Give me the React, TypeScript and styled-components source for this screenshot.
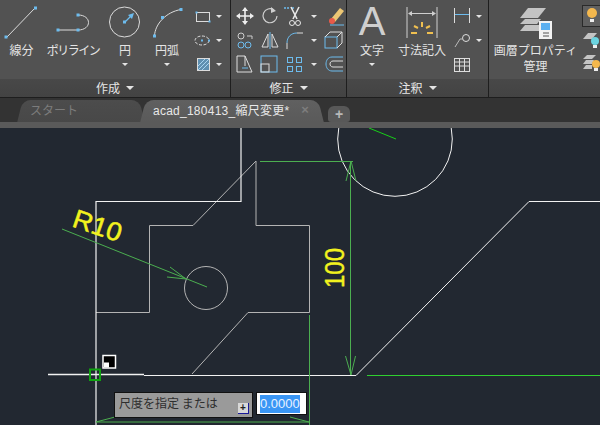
import React from "react";
import styled, { createGlobalStyle } from "styled-components";

const Global = createGlobalStyle`
  html, body { margin: 0; padding: 0; width: 600px; height: 425px; overflow: hidden; background: #222831; }
  #root { width: 600px; height: 425px; }
  * { box-sizing: border-box; }
`;

const Page = styled.div`
  width: 600px; height: 425px; display: flex; flex-direction: column; overflow: hidden;
  font-family: "Noto Sans CJK JP", "Liberation Sans", sans-serif;
`;
const Ribbon = styled.div`
  height: 98px; flex: none; display: flex; background: #1e1e1e; padding-bottom: 1px;
`;
const Panel = styled.section<{ $w: number }>`
  width: ${(p) => p.$w}px; flex: none; display: flex; flex-direction: column;
  margin-right: 1px; background: #525252;
  &:last-child { margin-right: 0; flex: 1; }
`;
const PanelBody = styled.div`
  height: 79px; display: flex; overflow: hidden;
`;
const PanelTitle = styled.div`
  height: 18px; display: flex; align-items: center; justify-content: center; gap: 6px;
  background: linear-gradient(#484848, #434343); color: #e6e6e6; font-size: 12px; line-height: 18px;
`;
const Caret = styled.i`
  display: block; width: 0; height: 0; flex: none;
  border-left: 3.5px solid transparent; border-right: 3.5px solid transparent; border-top: 3.5px solid #e4e4e4;
`;
const TitleCaret = styled(Caret)`
  border-left-width: 4px; border-right-width: 4px; border-top-width: 4px;
`;
const BigTool = styled.div<{ $w: number }>`
  width: ${(p) => p.$w}px; flex: none; display: flex; flex-direction: column; align-items: center;
  color: #e4e4e4;
`;
const BigIcon = styled.svg`
  display: block; height: 42px; flex: none;
`;
const BigLabel = styled.div<{ $tight?: boolean }>`
  font-size: 12px; line-height: 16px; height: 16px; white-space: nowrap;
  letter-spacing: ${(p) => (p.$tight ? "-1.5px" : "0")};
`;
const BigCaret = styled(Caret)`
  margin-top: 5px;
`;
const LetterIcon = styled.div`
  height: 42px; font-family: "Liberation Sans", sans-serif; font-size: 40px; line-height: 42px; color: #cfcfcf;
`;
const SmallColumn = styled.div<{ $w: number; $inset?: number }>`
  width: ${(p) => p.$w}px; flex: none; display: flex; flex-direction: column; padding: 4px 0 0 ${(p) => p.$inset ?? 0}px;
`;
const SmallRow = styled.div`
  height: 24px; display: flex; align-items: center; gap: 3px;
`;
const SmallIcon = styled.svg`
  display: block; width: 22px; height: 22px; flex: none;
`;
const ToolGrid = styled.div`
  display: grid; grid-template-columns: 25px 25px 39px 22px; grid-auto-rows: 24px;
  padding: 4px 0 0 3px; align-items: center;
`;
const Cell = styled.div`
  display: flex; align-items: center; gap: 5px;
`;
const Selected = styled.div`
  width: 19px; height: 22px; border: 1px solid #2a2a2a; background: #606060; display: flex; align-items: center; justify-content: center;
  margin-top: 1px;
`;
const TabBar = styled.div`
  height: 30px; flex: none; display: flex; align-items: flex-end; padding: 0 0 6px 20px;
  background: linear-gradient(#333 0, #333 24px, #5a5a5a 24px, #5a5a5a 30px);
`;
const Tab = styled.div<{ $active?: boolean; $w: number }>`
  position: relative; width: ${(p) => p.$w}px; height: 22px; margin-right: 1px; flex: none;
  display: flex; align-items: center; font-size: 12px; line-height: 20px; isolation: isolate;
  color: ${(p) => (p.$active ? "#e8e8e8" : "#7c7c7c")};
  letter-spacing: ${(p) => (p.$active ? "0.25px" : "0")};
  font-family: "Liberation Sans", "Noto Sans CJK JP", sans-serif;
  padding-left: 10px;
  &::before, &::after {
    content: ""; position: absolute; top: 0; bottom: 0; width: 60%; z-index: -1;
    background: ${(p) => (p.$active ? "linear-gradient(#606060, #5a5a5a)" : "linear-gradient(#4c4c4c, #484848)")};
  }
  &::before { left: 0; transform: skewX(-14deg); border-top-left-radius: 8px; }
  &::after { right: 0; transform: skewX(14deg); border-top-right-radius: 8px; }
`;
const TabClose = styled.span`
  position: absolute; right: 12px; top: 0; line-height: 20px; color: #7d7d7d; font-size: 13px; font-weight: 700;
`;
const AddTab = styled.div`
  width: 22px; height: 16px; background: #585858; border-radius: 6px 6px 3px 3px; color: #b8b8b8;
  display: flex; align-items: center; justify-content: center; font: 700 14px/16px "Liberation Sans", sans-serif;
  margin-left: 6px;
`;
const Canvas = styled.main`
  position: relative; flex: 1; background: #222831; overflow: hidden;
`;
const Drawing = styled.svg`
  display: block; width: 600px; height: 297px;
`;
const Prompt = styled.div`
  position: absolute; left: 114px; top: 264px; width: 139px; height: 26px; background: #9a9a9a;
  border: 1px solid #111; color: #2e2e2e; font-size: 12px; line-height: 18px; padding: 1px 0 0 4px; white-space: pre;
`;
const PromptIcon = styled.span`
  position: absolute; right: 3px; bottom: 3px; width: 11px; height: 11px; background: #d8d8d8;
  border-right: 1px solid #1a1a9a; border-bottom: 1px solid #1a1a9a; color: #222;
  font: 700 10px/10px "Liberation Sans", sans-serif; text-align: center;
`;
const ValueBox = styled.div`
  position: absolute; left: 256px; top: 264px; width: 51px; height: 23px; background: #fff; border: 1px solid #111; padding: 2px 0 0 3px;
`;
const ValueText = styled.span`
  display: block; width: 40px; height: 18px; background: #3a96f5; color: #e8f2ff;
  font: 13px/18px "Liberation Sans", sans-serif; white-space: nowrap;
`;

const BLUE = "#6dbcee";
const WHITE = "#dcdcdc";
const Grip = ({ x, y, s = 3 }: { x: number; y: number; s?: number }) => (
  <rect x={x - s / 2} y={y - s / 2} width={s} height={s} fill={BLUE} />
);

export default function App() {
  return (
    <Page>
      <Global />
      <Ribbon>
        <Panel $w={230}>
          <PanelBody>
            <BigTool $w={43}>
              <BigIcon width="43" viewBox="0 0 43 42">
                <path d="M7 37 L35 8" stroke={WHITE} strokeWidth="1" fill="none" />
                <Grip x={6} y={37} />
                <Grip x={35.5} y={8} />
              </BigIcon>
              <BigLabel>線分</BigLabel>
            </BigTool>
            <BigTool $w={60}>
              <BigIcon width="60" viewBox="43 0 60 42">
                <path d="M58 30 H78 C92 30 92 15 78 15" stroke={WHITE} strokeWidth="1" fill="none" />
                <Grip x={58} y={30} />
                <Grip x={78} y={30} />
                <Grip x={78} y={15} />
              </BigIcon>
              <BigLabel $tight>ポリライン</BigLabel>
            </BigTool>
            <BigTool $w={44}>
              <BigIcon width="44" viewBox="103 0 44 42">
                <circle cx="124.5" cy="22" r="15" stroke={WHITE} strokeWidth="1" fill="none" />
                <path d="M125 22 L132 15" stroke={BLUE} strokeWidth="1.2" />
                <path d="M134 13 L128 15 L132 19 Z" fill={BLUE} />
                <Grip x={124.5} y={22} />
              </BigIcon>
              <BigLabel>円</BigLabel>
              <BigCaret />
            </BigTool>
            <BigTool $w={40}>
              <BigIcon width="40" viewBox="147 0 40 42">
                <path d="M154.5 36 C155 24 166 12 181 9.5" stroke={WHITE} strokeWidth="1" fill="none" />
                <Grip x={154.5} y={36} />
                <Grip x={162.5} y={17.5} />
                <Grip x={181} y={9.5} />
              </BigIcon>
              <BigLabel>円弧</BigLabel>
              <BigCaret />
            </BigTool>
            <SmallColumn $w={43} $inset={4}>
              <SmallRow>
                <SmallIcon viewBox="191 4 22 22">
                  <rect x="196.5" y="11.5" width="13" height="9" stroke={WHITE} fill="none" />
                  <Grip x={196.5} y={11.5} s={2} />
                  <Grip x={209.5} y={20.5} s={2} />
                </SmallIcon>
                <Caret />
              </SmallRow>
              <SmallRow>
                <SmallIcon viewBox="191 28 22 22">
                  <ellipse cx="202" cy="39.5" rx="7" ry="4.5" stroke={WHITE} strokeDasharray="3 1.5" fill="none" />
                  <Grip x={202} y={39.5} s={2} />
                  <Grip x={209} y={39.5} s={2} />
                </SmallIcon>
                <Caret />
              </SmallRow>
              <SmallRow>
                <SmallIcon viewBox="191 52 22 22">
                  <rect x="197.5" y="57.5" width="12" height="12" fill="#5f8fb0" stroke={WHITE} />
                  <path d="M198 65 L205 58 M198 69 L209 58 M202 69 L209 62" stroke="#a9d4f0" strokeWidth="1" />
                </SmallIcon>
                <Caret />
              </SmallRow>
            </SmallColumn>
          </PanelBody>
          <PanelTitle>作成<TitleCaret /></PanelTitle>
        </Panel>

        <Panel $w={115}>
          <PanelBody>
            <ToolGrid>
              <Cell>
                <SmallIcon viewBox="0 0 22 22">
                  <path d="M11 3 V19 M3 11 H19" stroke="#eee" strokeWidth="1.6" />
                  <path d="M11 2 L8 6 H14 Z M11 20 L8 16 H14 Z M2 11 L6 8 V14 Z M20 11 L16 8 V14 Z" fill="#eee" />
                </SmallIcon>
              </Cell>
              <Cell>
                <SmallIcon viewBox="0 0 22 22">
                  <path d="M15 5 A7 7 0 1 0 18 11" stroke="#cfcfcf" strokeWidth="1.2" fill="none" />
                  <path d="M12 2 L17 6 L12 8 Z" fill="#cfcfcf" />
                </SmallIcon>
              </Cell>
              <Cell>
                <SmallIcon viewBox="0 0 22 22">
                  <path d="M0 3 H6 M8 3 H11" stroke={BLUE} strokeWidth="1.4" strokeDasharray="2 1" />
                  <path d="M7 2 L13 14 M15 2 L9 14" stroke="#e8e8e8" strokeWidth="1.6" />
                  <circle cx="14" cy="18" r="2.5" stroke="#e8e8e8" fill="none" />
                  <circle cx="8" cy="18" r="2.5" stroke="#e8e8e8" fill="none" />
                </SmallIcon>
                <Caret />
              </Cell>
              <Cell>
                <SmallIcon viewBox="0 0 22 22">
                  <path d="M8 14 L17 3 L21 6 L12 17 Z" fill="#edc774" />
                  <circle cx="9" cy="16" r="3" fill="#e85a4a" />
                  <path d="M7 20 H21" stroke={BLUE} strokeWidth="1" />
                </SmallIcon>
              </Cell>
              <Cell>
                <SmallIcon viewBox="0 0 22 22">
                  <circle cx="7" cy="7" r="3" stroke="#ccc" fill="none" />
                  <circle cx="7" cy="16" r="3" stroke={BLUE} fill="none" />
                  <circle cx="14" cy="16" r="3" stroke={BLUE} fill="none" />
                  <path d="M13 7 H18 V10" stroke="#ccc" fill="none" />
                </SmallIcon>
              </Cell>
              <Cell>
                <SmallIcon viewBox="0 0 22 22">
                  <path d="M9 5 L3 18 H9 Z" stroke="#ddd" fill="none" />
                  <path d="M11 3 V20" stroke={BLUE} />
                  <path d="M13 5 L19 18 H13 Z" stroke="#ddd" fill="none" />
                </SmallIcon>
              </Cell>
              <Cell>
                <SmallIcon viewBox="0 0 22 22">
                  <path d="M3 20 V14" stroke="#ddd" fill="none" />
                  <path d="M3 14 C3 8 7 4 13 4" stroke={BLUE} fill="none" />
                  <path d="M13 4 H19" stroke="#ddd" fill="none" />
                </SmallIcon>
                <Caret />
              </Cell>
              <Cell>
                <SmallIcon viewBox="0 0 22 22">
                  <rect x="2" y="8" width="12" height="11" stroke={BLUE} fill="none" />
                  <path d="M2 8 L7 3 H19 V14 L14 19 M14 8 L19 3" stroke="#ddd" fill="none" />
                </SmallIcon>
              </Cell>
              <Cell>
                <SmallIcon viewBox="0 0 22 22">
                  <path d="M3 3 H11 L18 19 H3 Z M11 3 V13" stroke="#ddd" fill="none" />
                  <path d="M8 15 H14" stroke={BLUE} />
                </SmallIcon>
              </Cell>
              <Cell>
                <SmallIcon viewBox="0 0 22 22">
                  <rect x="2" y="3" width="16" height="16" stroke={BLUE} fill="none" />
                  <rect x="2" y="11" width="8" height="8" stroke="#ddd" fill="none" />
                </SmallIcon>
              </Cell>
              <Cell>
                <SmallIcon viewBox="0 0 22 22">
                  <rect x="3.5" y="4.5" width="5" height="5" stroke={BLUE} fill="none" />
                  <rect x="12.5" y="4.5" width="5" height="5" stroke={BLUE} fill="none" />
                  <rect x="3.5" y="13.5" width="5" height="5" stroke={BLUE} fill="none" />
                  <rect x="12.5" y="13.5" width="5" height="5" stroke={BLUE} fill="none" />
                </SmallIcon>
                <Caret />
              </Cell>
              <Cell>
                <SmallIcon viewBox="0 0 22 22">
                  <path d="M20 4 H9 C1 4 1 18 9 18 H20" stroke={BLUE} fill="none" />
                  <path d="M20 8 H10 C6 8 6 14 10 14 H20" stroke="#ddd" fill="none" />
                </SmallIcon>
              </Cell>
            </ToolGrid>
          </PanelBody>
          <PanelTitle>修正<TitleCaret /></PanelTitle>
        </Panel>

        <Panel $w={141}>
          <PanelBody>
            <BigTool $w={50}>
              <LetterIcon>A</LetterIcon>
              <BigLabel>文字</BigLabel>
              <BigCaret />
            </BigTool>
            <BigTool $w={50}>
              <BigIcon width="50" viewBox="397 0 50 42">
                <path d="M407 7 V38 M437 7 V38" stroke="#cfcfcf" />
                <path d="M409 13.5 H435" stroke="#cfcfcf" />
                <path d="M408 13.5 L412 11 V16 Z M436 13.5 L432 11 V16 Z" fill="#cfcfcf" />
                <path d="M422 22 V27 M414 26 L418 28 M430 26 L426 28 M411 33 H417 M427 33 H433" stroke="#f0c050" strokeWidth="2" />
              </BigIcon>
              <BigLabel>寸法記入</BigLabel>
            </BigTool>
            <SmallColumn $w={40} $inset={4}>
              <SmallRow>
                <SmallIcon viewBox="451 4 22 22">
                  <path d="M454.5 7 V22 M469.5 7 V22" stroke="#ddd" />
                  <path d="M455 13.5 H469" stroke={BLUE} />
                </SmallIcon>
                <Caret />
              </SmallRow>
              <SmallRow>
                <SmallIcon viewBox="451 28 22 22">
                  <circle cx="466" cy="37" r="3.5" stroke="#ddd" fill="none" />
                  <path d="M463 38 H460 L455 46" stroke="#bbb" fill="none" />
                </SmallIcon>
                <Caret />
              </SmallRow>
              <SmallRow>
                <SmallIcon viewBox="451 52 22 22">
                  <rect x="454.5" y="57.5" width="15" height="13" stroke="#ddd" fill="none" />
                  <path d="M454 61 H470 M454 65 H470 M459.5 57 V71 M464.5 57 V71" stroke="#ddd" />
                </SmallIcon>
              </SmallRow>
            </SmallColumn>
          </PanelBody>
          <PanelTitle>注釈<TitleCaret /></PanelTitle>
        </Panel>

        <Panel $w={112}>
          <PanelBody>
            <BigTool $w={93}>
              <BigIcon width="93" viewBox="489 0 93 42">
                <path d="M520 18 L528 8 H546 L538 18 Z" fill="#c4c4c4" />
                <path d="M520 24 L525 19 H541 L537 24 Z" fill="#c4c4c4" />
                <path d="M520 31 L525 25 H539 V31 Z" fill="#c4c4c4" />
                <rect x="539" y="21" width="13" height="18" fill="#f2f2f2" />
                <rect x="541" y="23" width="9" height="7" fill="#5cb0f0" />
                <path d="M543 33 H549 M543 36 H549" stroke="#555" />
              </BigIcon>
              <BigLabel>画層プロパティ</BigLabel>
              <BigLabel>管理</BigLabel>
            </BigTool>
            <SmallColumn $w={19}>
              <Selected>
                <svg width="14" height="18" viewBox="0 0 14 18">
                  <circle cx="7" cy="6" r="5" fill="#f4b84e" />
                  <rect x="5" y="12" width="4" height="3" fill="#eee" />
                </svg>
              </Selected>
              <SmallRow>
                <svg width="19" height="20" viewBox="0 0 19 20">
                  <path d="M1 10 L6 4 H15 L10 10 Z" fill="#c4c4c4" />
                  <circle cx="13" cy="12" r="4" fill="#6cd4e0" />
                  <rect x="11" y="16" width="4" height="3" fill="#eee" />
                </svg>
              </SmallRow>
              <SmallRow>
                <svg width="19" height="20" viewBox="0 0 19 20">
                  <path d="M1 6 L5 2 H14 L10 6 Z M1 11 L4 7 H12 L10 11 Z M1 16 L4 12 H10 V16 Z" fill="#c4c4c4" />
                  <circle cx="14" cy="11" r="4" fill="#f4b84e" />
                  <rect x="12" y="15" width="4" height="3" fill="#eee" />
                </svg>
              </SmallRow>
            </SmallColumn>
          </PanelBody>
          <PanelTitle />
        </Panel>
      </Ribbon>

      <TabBar>
        <Tab $w={122}>スタート</Tab>
        <Tab $w={178} $active>
          acad_180413_縮尺変更*
          <TabClose>×</TabClose>
        </Tab>
        <AddTab>+</AddTab>
      </TabBar>

      <Canvas>
        <Drawing viewBox="0 128 600 297" shapeRendering="geometricPrecision">
          <g fill="none" stroke="#b4b4b4" strokeWidth="1">
            <path d="M96 312.5 H149.5 V225.5 H193 L256 161 V225.5 H309.5 V312.5 H248 L192 374" />
            <circle cx="206" cy="288" r="21.5" />
          </g>
          <g fill="none" stroke="#f2f2f2" strokeWidth="1">
            <path d="M241 128 V201.5 H96 V425" strokeWidth="1.2" />
            <path d="M48 374.5 H144" strokeWidth="1.4" />
            <path d="M144 375.5 H356 L529 201.5 H600" />
            <circle cx="395" cy="139" r="57.3" />
          </g>
          <path d="M367 375.5 H600" stroke="#2fcf2f" strokeWidth="1.2" />
          <path d="M369 128 L396 139" stroke="#18d018" strokeWidth="1" />
          <g fill="none" stroke="#4cae50" strokeWidth="1">
            <path d="M260 161.5 H353 M350.5 161 V375 M346 181 L351 161 L356 181 M345.5 356 L351 375 L355.5 356" />
            <path d="M309.5 315 V425 M96 422 H309 M115 417 L96 422 M290 417 L309 422" />
            <path d="M62 229 L207 287 M170 267 L186 279 L167 277" />
          </g>
          <text x="71" y="226" transform="rotate(19 71 226)" fill="#f2f21e" stroke="#f2f21e" strokeWidth="0.5" fontFamily="Liberation Sans, sans-serif" fontSize="26" textLength="50" lengthAdjust="spacingAndGlyphs">R10</text>
          <text x="344" y="288" transform="rotate(-90 344 288)" fill="#f2f21e" stroke="#f2f21e" strokeWidth="0.4" fontFamily="Liberation Sans, sans-serif" fontSize="28" textLength="40" lengthAdjust="spacingAndGlyphs">100</text>
          <rect x="90" y="369.5" width="10" height="10.5" fill="none" stroke="#0fa30f" strokeWidth="2" />
          <rect x="103" y="355.5" width="12.5" height="12.5" fill="#000" stroke="#fff" strokeWidth="1.5" />
          <rect x="104" y="362.5" width="5" height="5" fill="#fff" />
        </Drawing>
        <Prompt>
          尺度を指定 または
          <PromptIcon>+</PromptIcon>
        </Prompt>
        <ValueBox>
          <ValueText>0.0000</ValueText>
        </ValueBox>
      </Canvas>
    </Page>
  );
}
